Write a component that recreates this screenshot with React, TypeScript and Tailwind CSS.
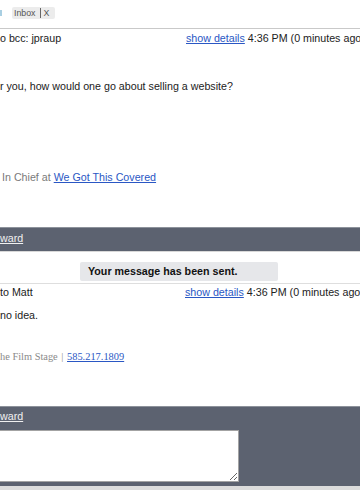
export default function App() {
  return (
    <div className="w-[360px] h-[490px] overflow-hidden bg-white text-[#222] text-[10.7px] leading-[13px] font-['Liberation_Sans',Arial,sans-serif]">
      {/* ── top strip with label pill ── */}
      <div className="h-[28px] flex items-start">
        <div className="mt-[10px] w-[2px] h-[6px] bg-[#a9cfe2]" />
        <div className="ml-[10px] mt-[7px] h-[12px] px-[1px] flex items-center rounded-[2px] bg-[#ececec] text-[8.8px] leading-[12px] text-[#555]">
          <span className="pl-[1px]">Inbox</span>
          <span className="ml-[4px] w-px h-[10px] bg-[#666]" />
          <span className="ml-[3px] pr-[5px]">X</span>
        </div>
      </div>

      {/* ── first message ── */}
      <div className="border-t border-[#c9c9c9]">
        <div className="h-[20px] pt-[3px] flex whitespace-nowrap">
          <span className="w-[186px] shrink-0">o bcc: jpraup</span>
          <span>
            <a className="text-[#2a57c4] underline">show details</a> 4:36 PM (0 minutes ago)
          </span>
        </div>
        <p className="mt-[31px] whitespace-nowrap">r you, how would one go about selling a website?</p>
        <p className="mt-[78px] pl-[2px] whitespace-nowrap text-[#7a7a7a]">
          In Chief at <a className="text-[#2a57c4] underline">We Got This Covered</a>
        </p>
      </div>

      {/* ── reply bar ── */}
      <div className="mt-[43px] h-[25px] border-t border-[#8d929b] border-b border-b-[#d8d8d8] bg-[#5c6270] pt-[4px]">
        <a className="text-[#f0f0f0] underline">ward</a>
      </div>

      {/* ── sent notice ── */}
      <div className="mt-[10px] ml-[80px] w-[198px] h-[19px] rounded-[2px] bg-[#e6e7ea] pl-[8px] pt-[3px] font-bold text-[#111]">
        Your message has been sent.
      </div>

      {/* ── second message ── */}
      <div className="mt-[2px] border-t border-[#dedede]">
        <div className="h-[15px] pt-[2px] flex whitespace-nowrap">
          <span className="w-[185px] shrink-0">to Matt</span>
          <span>
            <a className="text-[#2a57c4] underline">show details</a> 4:36 PM (0 minutes ago)
          </span>
        </div>
        <p className="mt-[10px] whitespace-nowrap">no idea.</p>
        <p className="mt-[28px] whitespace-nowrap font-['Liberation_Serif','Times_New_Roman',serif] text-[10.4px] text-[#8a8a8a]">
          he Film Stage <span className="mx-[1px]">|</span>{" "}
          <a className="text-[#2a57c4] underline">585.217.1809</a>
        </p>
      </div>

      {/* ── reply box ── */}
      <div className="mt-[43px] h-[80px] border-t border-[#8d929b] bg-[#5c6270] pt-[3px]">
        <a className="text-[#f0f0f0] underline">ward</a>
        <textarea className="block mt-[7px] ml-[-10px] w-[249px] h-[52px] bg-white border border-[#a3a3a3] outline-none" />
      </div>
      <div className="h-[4px] bg-[#dcdcdc]" />
    </div>
  );
}
